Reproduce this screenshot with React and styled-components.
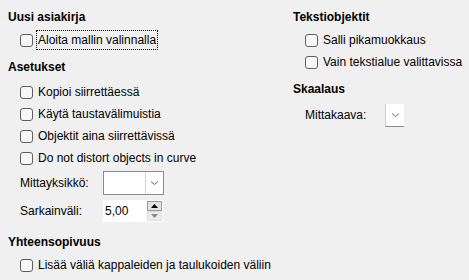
import styled, { createGlobalStyle } from "styled-components";

const Global = createGlobalStyle`
  html, body {
    margin: 0;
    background: #f0f0f0;
  }
  body {
    font-family: "Liberation Sans", Arial, sans-serif;
    font-size: 12px;
    color: #000;
  }
`;

const Page = styled.div`
  display: flex;
  padding: 8px 0 0 8px;
  width: 469px;
  height: 280px;
  box-sizing: border-box;
`;

const Column = styled.div`
  display: flex;
  flex-direction: column;
  width: ${(p) => p.$width}px;
`;

const Section = styled.div`
  display: flex;
  flex-direction: column;
  margin-bottom: ${(p) => p.$gap || 0}px;
`;

const Heading = styled.div`
  height: 18px;
  line-height: 18px;
  font-weight: bold;
  margin-bottom: ${(p) => p.$after ?? 3}px;
`;

const Items = styled.div`
  display: flex;
  flex-direction: column;
  padding-left: 12px;
`;

const CheckRow = styled.label`
  display: flex;
  align-items: center;
  height: 22px;
  gap: 5px;
`;

const Box = styled.span`
  width: 13px;
  height: 13px;
  box-sizing: border-box;
  border: 1px solid #5f5f5f;
  border-radius: 3px;
  background: #f7f7f7;
  flex: none;
`;

const Text = styled.span`
  white-space: nowrap;
  padding: 2px 1px;
  margin-left: -2px;
  border: 1px dotted ${(p) => (p.$focus ? "#000" : "transparent")};
`;

const FieldRow = styled.div`
  display: flex;
  align-items: center;
  height: ${(p) => p.$h}px;
  margin-top: ${(p) => p.$top || 0}px;
`;

const Label = styled.span`
  width: ${(p) => p.$w}px;
  flex: none;
`;

const Combo = styled.div`
  display: flex;
  width: ${(p) => p.$w}px;
  height: 24px;
  box-sizing: border-box;
  border: 1px solid #8a8a8a;
  background: #fff;
`;

const ComboField = styled.div`
  flex: 1;
`;

const ComboButton = styled.div`
  width: 17px;
  display: flex;
  align-items: center;
  justify-content: center;
  border-left: 1px solid #d4d4d4;
`;

const SmallCombo = styled.div`
  width: 19px;
  height: 23px;
  box-sizing: border-box;
  border-left: 1px solid #d0d0d0;
  border-bottom: 1px solid #8a8a8a;
  background: #fff;
  display: flex;
  align-items: center;
  justify-content: center;
`;

const Spin = styled.div`
  display: flex;
  width: 60px;
  height: 22px;
  background: #fff;
`;

const SpinField = styled.div`
  flex: 1;
  display: flex;
  align-items: center;
  padding-left: 2px;
`;

const SpinButtons = styled.div`
  width: 15px;
  display: flex;
  flex-direction: column;
  padding: 1px 1px 1px 0;
`;

const SpinButton = styled.div`
  flex: 1;
  display: flex;
  align-items: center;
  justify-content: center;
  box-sizing: border-box;
  border: 1px solid ${(p) => (p.$active ? "#9a9a9a" : "#dcdcdc")};
  background: ${(p) => (p.$active ? "#e3e3e3" : "#ececec")};
`;

const Chevron = () => (
  <svg width="9" height="6" viewBox="0 0 9 6">
    <path d="M1 1.5 L4.5 4.5 L8 1.5" fill="none" stroke="#6a6a6a" strokeWidth="1" />
  </svg>
);

const Triangle = ({ up, color }) => (
  <svg width="7" height="4" viewBox="0 0 7 4">
    <path d={up ? "M0 4 L3.5 0 L7 4 Z" : "M0 0 L3.5 4 L7 0 Z"} fill={color} />
  </svg>
);

const Check = ({ children, focus }) => (
  <CheckRow>
    <Box />
    <Text $focus={focus}>{children}</Text>
  </CheckRow>
);

export default function App() {
  return (
    <>
      <Global />
      <Page>
        <Column $width={285}>
          <Section $gap={7}>
            <Heading>Uusi asiakirja</Heading>
            <Items>
              <Check focus>Aloita mallin valinnalla</Check>
            </Items>
          </Section>
          <Section $gap={11}>
            <Heading $after={5}>Asetukset</Heading>
            <Items>
              <Check>Kopioi siirrettäessä</Check>
              <Check>Käytä taustavälimuistia</Check>
              <Check>Objektit aina siirrettävissä</Check>
              <Check>Do not distort objects in curve</Check>
              <FieldRow $h={24} $top={2}>
                <Label $w={83}>Mittayksikkö:</Label>
                <Combo $w={61}>
                  <ComboField />
                  <ComboButton>
                    <Chevron />
                  </ComboButton>
                </Combo>
              </FieldRow>
              <FieldRow $h={22} $top={5}>
                <Label $w={83}>Sarkainväli:</Label>
                <Spin>
                  <SpinField>5,00</SpinField>
                  <SpinButtons>
                    <SpinButton $active>
                      <Triangle up color="#000" />
                    </SpinButton>
                    <SpinButton>
                      <Triangle color="#8a8a8a" />
                    </SpinButton>
                  </SpinButtons>
                </Spin>
              </FieldRow>
            </Items>
          </Section>
          <Section>
            <Heading>Yhteensopivuus</Heading>
            <Items>
              <Check>Lisää väliä kappaleiden ja taulukoiden väliin</Check>
            </Items>
          </Section>
        </Column>
        <Column $width={170}>
          <Section $gap={7}>
            <Heading>Tekstiobjektit</Heading>
            <Items>
              <Check>Salli pikamuokkaus</Check>
              <Check>Vain tekstialue valittavissa</Check>
            </Items>
          </Section>
          <Section>
            <Heading>Skaalaus</Heading>
            <Items>
              <FieldRow $h={24} $top={2}>
                <Label $w={80}>Mittakaava:</Label>
                <SmallCombo>
                  <Chevron />
                </SmallCombo>
              </FieldRow>
            </Items>
          </Section>
        </Column>
      </Page>
    </>
  );
}
